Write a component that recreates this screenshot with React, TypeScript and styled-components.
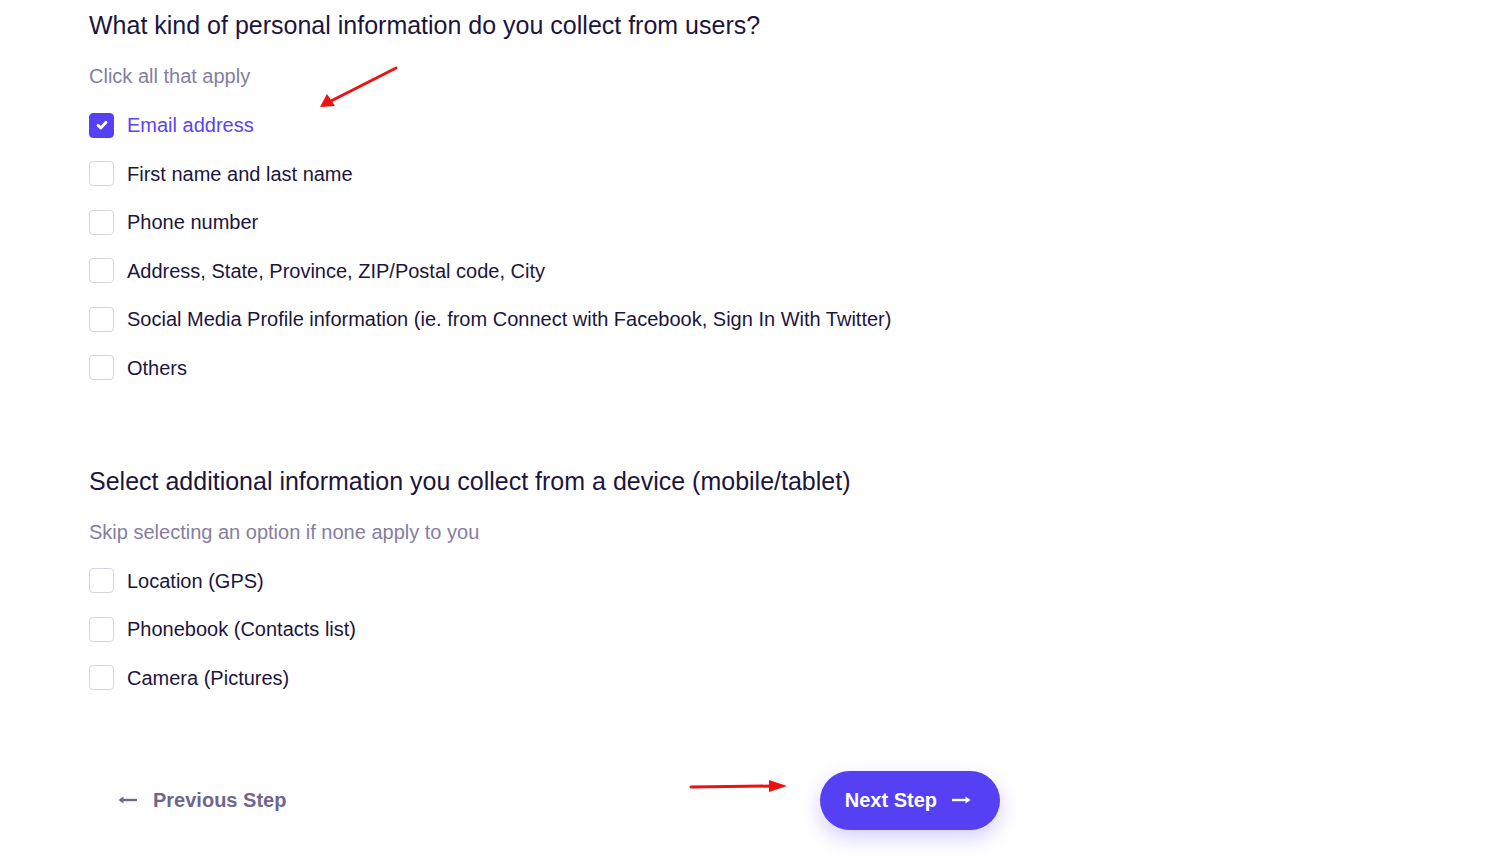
import * as React from 'react';
import styled, { createGlobalStyle } from 'styled-components';

const GlobalStyle = createGlobalStyle`
  html, body {
    margin: 0;
    padding: 0;
    background: #ffffff;
    font-family: "Liberation Sans", Arial, sans-serif;
  }
`;

const Page = styled.div`
  position: relative;
  width: 1496px;
  height: 859px;
  box-sizing: border-box;
  padding: 11px 0 0 89px;
  overflow: hidden;
`;

const Section = styled.section<{ $gap?: number }>`
  display: flex;
  flex-direction: column;
  margin-bottom: ${(p) => p.$gap ?? 0}px;
`;

const Title = styled.h2`
  margin: 0;
  font-size: 25px;
  line-height: 28px;
  font-weight: 400;
  color: #1c1540;
`;

const Hint = styled.p`
  margin: 25px 0 25px;
  font-size: 20px;
  line-height: 24px;
  color: #857ea1;
`;

const OptionList = styled.div`
  display: flex;
  flex-direction: column;
  gap: 24.5px;
`;

const Option = styled.label<{ $checked?: boolean }>`
  display: flex;
  align-items: center;
  gap: 13px;
  height: 24px;
  font-size: 20px;
  line-height: 24px;
  color: ${(p) => (p.$checked ? '#5a43f5' : '#1c1540')};
  cursor: pointer;
`;

const Box = styled.span<{ $checked?: boolean }>`
  display: flex;
  align-items: center;
  justify-content: center;
  width: 25px;
  height: 25px;
  box-sizing: border-box;
  border-radius: 4px;
  border: 1px solid ${(p) => (p.$checked ? '#5540f2' : '#d3d6de')};
  background: ${(p) => (p.$checked ? '#5540f2' : '#ffffff')};
`;

const Footer = styled.div`
  display: flex;
  align-items: center;
  justify-content: space-between;
  width: 911px;
`;

const BackButton = styled.button`
  display: flex;
  align-items: center;
  gap: 15px;
  padding: 0 0 0 29px;
  border: none;
  background: none;
  font-family: inherit;
  font-size: 20px;
  font-weight: 700;
  color: #6e6690;
  cursor: pointer;
`;

const NextButton = styled.button`
  display: flex;
  align-items: center;
  gap: 14px;
  height: 59px;
  padding: 0 29px 0 25px;
  border: none;
  border-radius: 30px;
  background: #5540f3;
  box-shadow: 0 8px 20px rgba(85, 64, 243, 0.25);
  font-family: inherit;
  font-size: 20px;
  font-weight: 700;
  color: #ffffff;
  cursor: pointer;
`;

const Annotation = styled.svg`
  position: absolute;
  pointer-events: none;
`;

const Check = () => (
  <svg width="14" height="14" viewBox="0 0 14 14">
    <path d="M3 7.4 L5.8 10 L11 4.2" fill="none" stroke="#fff" strokeWidth="2.8" strokeLinecap="round" strokeLinejoin="round" />
  </svg>
);

const Arrow = ({ dir }: { dir: 'left' | 'right' }) => (
  <svg width="20" height="10" viewBox="0 0 20 10">
    {dir === 'left' ? (
      <>
        <path d="M2 5 H19" stroke="currentColor" strokeWidth="2.4" />
        <path d="M0.5 5 L5.5 1.5 V8.5 Z" fill="currentColor" />
      </>
    ) : (
      <>
        <path d="M1 5 H18" stroke="currentColor" strokeWidth="2.4" />
        <path d="M19.5 5 L14.5 1.5 V8.5 Z" fill="currentColor" />
      </>
    )}
  </svg>
);

interface CheckOptionProps {
  label: string;
  checked: boolean;
  onToggle: () => void;
}

const CheckOption = ({ label, checked, onToggle }: CheckOptionProps) => (
  <Option $checked={checked} onClick={onToggle}>
    <Box $checked={checked}>{checked && <Check />}</Box>
    <span>{label}</span>
  </Option>
);

const personal = [
  'Email address',
  'First name and last name',
  'Phone number',
  'Address, State, Province, ZIP/Postal code, City',
  'Social Media Profile information (ie. from Connect with Facebook, Sign In With Twitter)',
  'Others',
];

const device = ['Location (GPS)', 'Phonebook (Contacts list)', 'Camera (Pictures)'];

const App = () => {
  const [picked, setPicked] = React.useState<Record<string, boolean>>({ 'Email address': true });
  const toggle = (k: string) => setPicked((p) => ({ ...p, [k]: !p[k] }));

  return (
    <Page>
      <GlobalStyle />
      <Section $gap={87}>
        <Title>What kind of personal information do you collect from users?</Title>
        <Hint>Click all that apply</Hint>
        <OptionList>
          {personal.map((l) => (
            <CheckOption key={l} label={l} checked={!!picked[l]} onToggle={() => toggle(l)} />
          ))}
        </OptionList>
      </Section>
      <Section $gap={81}>
        <Title>Select additional information you collect from a device (mobile/tablet)</Title>
        <Hint>Skip selecting an option if none apply to you</Hint>
        <OptionList>
          {device.map((l) => (
            <CheckOption key={l} label={l} checked={!!picked[l]} onToggle={() => toggle(l)} />
          ))}
        </OptionList>
      </Section>
      <Footer>
        <BackButton>
          <Arrow dir="left" />
          Previous Step
        </BackButton>
        <NextButton>
          Next Step
          <Arrow dir="right" />
        </NextButton>
      </Footer>

      <Annotation width="90" height="50" viewBox="0 0 90 50" style={{ left: 315, top: 63 }}>
        <path d="M81 5 L14 39" stroke="#f01010" strokeWidth="3" strokeLinecap="round" />
        <path d="M5 44 L12 31 L20 43 Z" fill="#f01010" />
      </Annotation>
      <Annotation width="110" height="20" viewBox="0 0 110 20" style={{ left: 685, top: 776 }}>
        <path d="M6 11 L88 10" stroke="#f01010" strokeWidth="3" strokeLinecap="round" />
        <path d="M102 10 L84 4 L84 16 Z" fill="#f01010" />
      </Annotation>
    </Page>
  );
};

export default App;
